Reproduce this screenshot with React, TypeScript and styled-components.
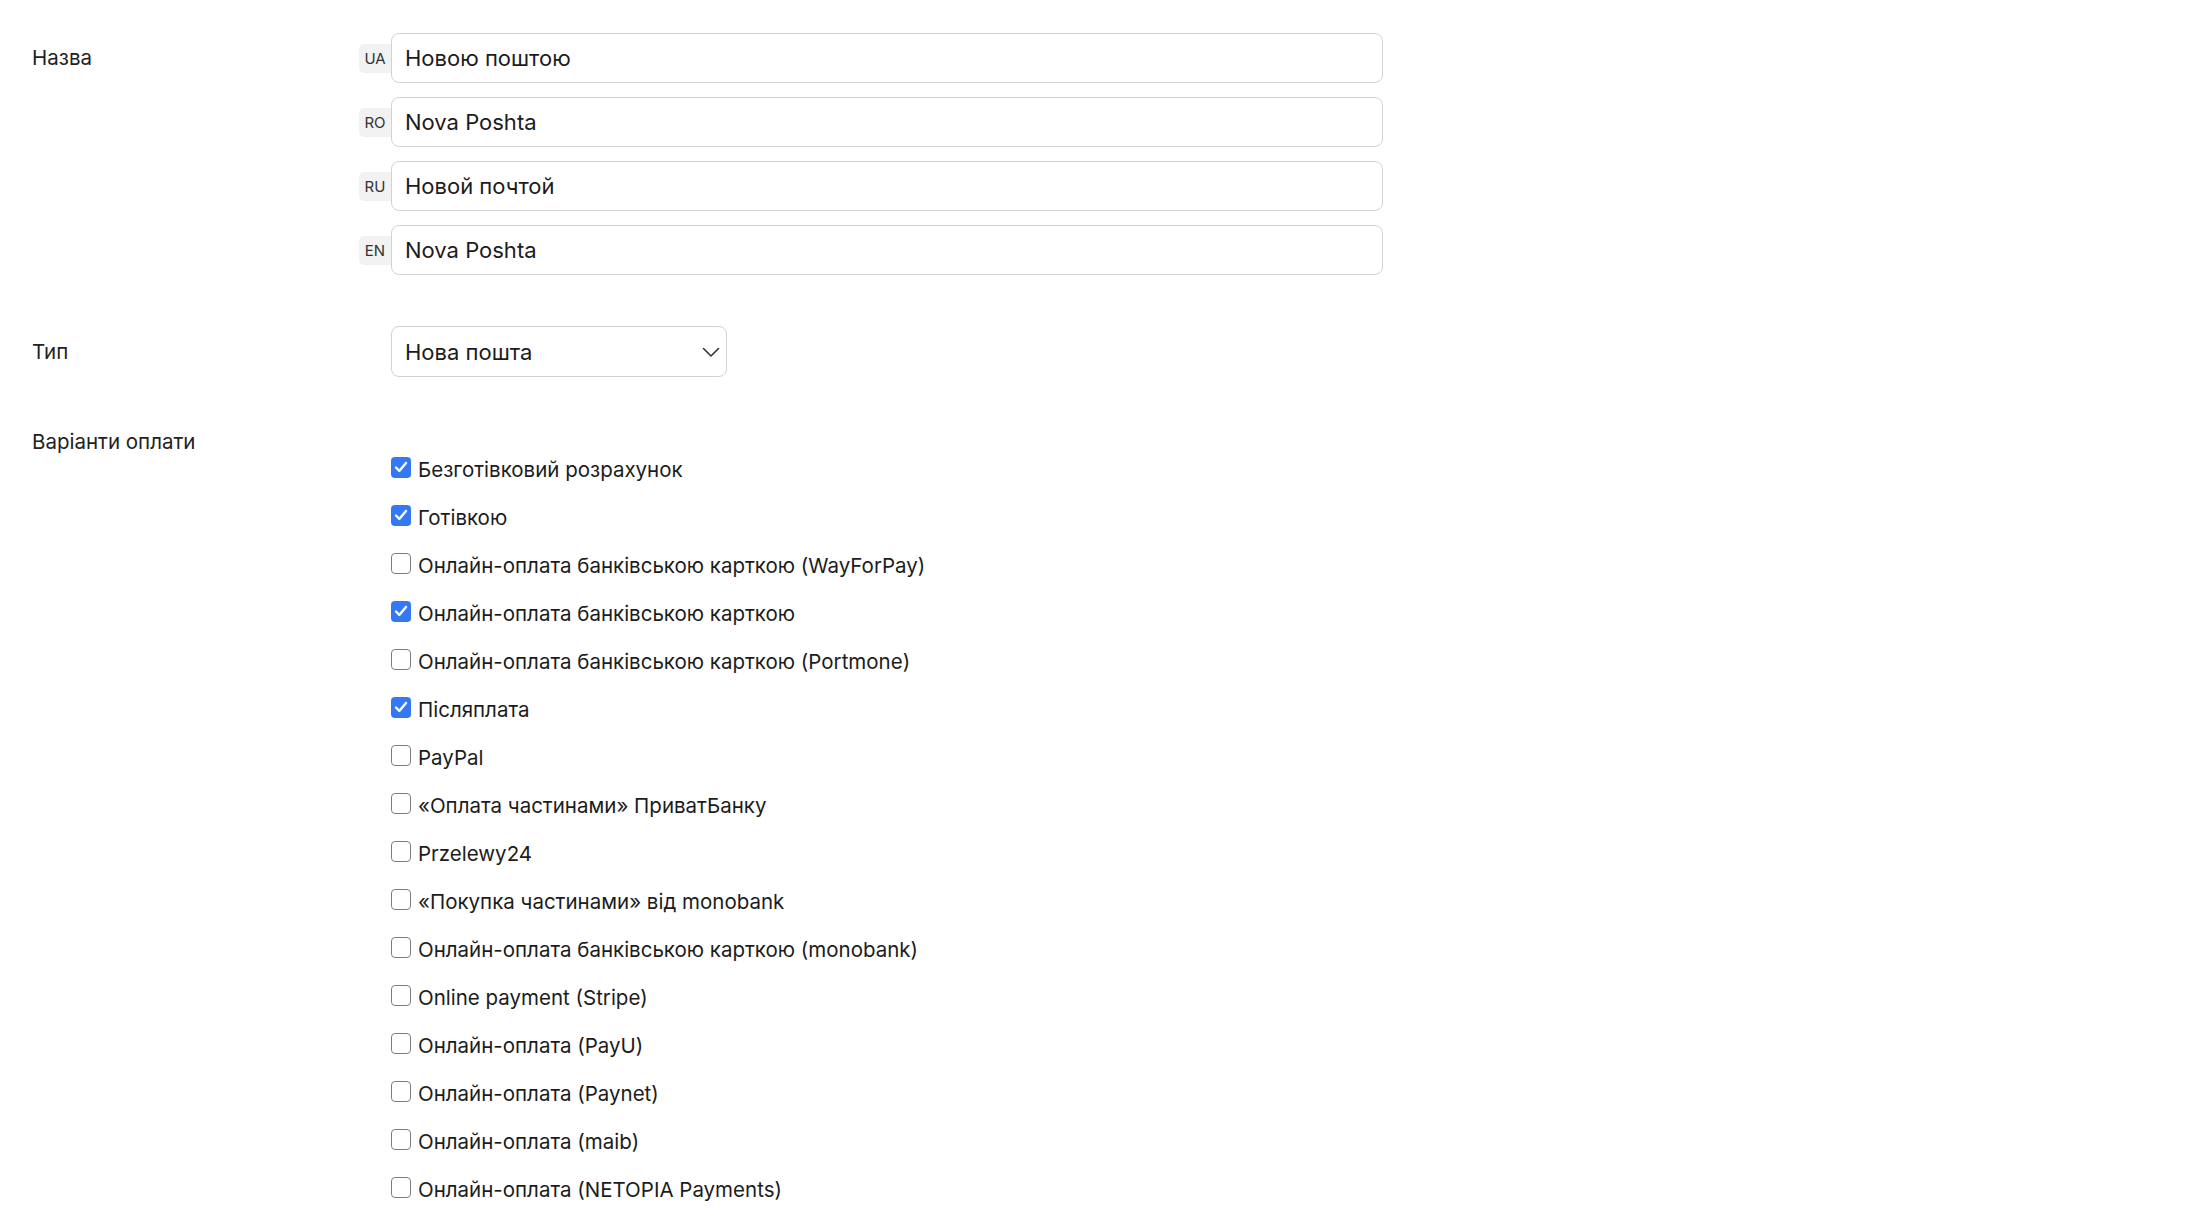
import React from "react"
import styled, { createGlobalStyle } from "styled-components"

const GlobalStyle = createGlobalStyle`
  html, body {
    margin: 0;
    padding: 0;
    background: #ffffff;
  }
  body {
    font-family: Inter, "Noto Sans", "Liberation Sans", sans-serif;
    color: #222222;
  }
`

const Page = styled.div`
  padding: 33px 32px 24px;
  display: flex;
  flex-direction: column;
`

const FormRow = styled.div<{ $gap?: number }>`
  display: grid;
  grid-template-columns: 327px 1024px;
  align-items: start;
  margin-top: ${(p) => p.$gap || 0}px;
`

const Label = styled.div<{ $lh: number }>`
  font-size: 20.5px;
  line-height: ${(p) => p.$lh}px;
  color: #222222;
`

const LangList = styled.div`
  display: flex;
  flex-direction: column;
  gap: 14px;
`

const LangRow = styled.div`
  display: flex;
  align-items: center;
`

const LangBadge = styled.span`
  width: 32px;
  height: 29px;
  flex: none;
  display: flex;
  align-items: center;
  justify-content: center;
  background: #f2f2f2;
  border-radius: 5px 0 0 5px;
  font-size: 15px;
  color: #333333;
`

const TextInput = styled.input`
  flex: 1;
  height: 50px;
  box-sizing: border-box;
  border: 1px solid #d2d2d2;
  border-radius: 8px;
  padding: 0 13px;
  font-family: inherit;
  font-size: 22px;
  color: #1c1c1c;
  background: #ffffff;
  outline: none;
`

const SelectWrap = styled.div`
  position: relative;
  margin-left: 32px;
  width: 336px;
`

const Select = styled.select`
  appearance: none;
  width: 100%;
  height: 51px;
  box-sizing: border-box;
  border: 1px solid #d2d2d2;
  border-radius: 8px;
  padding: 0 40px 0 13px;
  font-family: inherit;
  font-size: 22px;
  color: #1c1c1c;
  background: #ffffff;
  outline: none;
`

const Chevron = styled.svg`
  position: absolute;
  right: 7px;
  top: 21px;
  pointer-events: none;
`

const OptionList = styled.div`
  margin-left: 32px;
  padding-top: 27px;
  display: flex;
  flex-direction: column;
`

const OptionRow = styled.label`
  height: 48px;
  display: flex;
  align-items: center;
  gap: 7px;
  font-size: 20.5px;
  color: #1c1c1c;
  cursor: pointer;
`

const Box = styled.span<{ $checked: boolean }>`
  width: 20px;
  height: 21px;
  flex: none;
  box-sizing: border-box;
  margin-bottom: 4px;
  border-radius: 4px;
  display: flex;
  align-items: center;
  justify-content: center;
  background: ${(p) => (p.$checked ? "#3478f6" : "#ffffff")};
  border: ${(p) => (p.$checked ? "none" : "1.5px solid #7d7d7d")};
`

const names = [
  { code: "UA", value: "Новою поштою" },
  { code: "RO", value: "Nova Poshta" },
  { code: "RU", value: "Новой почтой" },
  { code: "EN", value: "Nova Poshta" },
]

const payments = [
  { label: "Безготівковий розрахунок", checked: true },
  { label: "Готівкою", checked: true },
  { label: "Онлайн-оплата банківською карткою (WayForPay)", checked: false },
  { label: "Онлайн-оплата банківською карткою", checked: true },
  { label: "Онлайн-оплата банківською карткою (Portmone)", checked: false },
  { label: "Післяплата", checked: true },
  { label: "PayPal", checked: false },
  { label: "«Оплата частинами» ПриватБанку", checked: false },
  { label: "Przelewy24", checked: false },
  { label: "«Покупка частинами» від monobank", checked: false },
  { label: "Онлайн-оплата банківською карткою (monobank)", checked: false },
  { label: "Online payment (Stripe)", checked: false },
  { label: "Онлайн-оплата (PayU)", checked: false },
  { label: "Онлайн-оплата (Paynet)", checked: false },
  { label: "Онлайн-оплата (maib)", checked: false },
  { label: "Онлайн-оплата (NETOPIA Payments)", checked: false },
]

export default function App() {
  return (
    <>
      <GlobalStyle />
      <Page>
        <FormRow>
          <Label $lh={50}>Назва</Label>
          <LangList>
            {names.map((n) => (
              <LangRow key={n.code}>
                <LangBadge>{n.code}</LangBadge>
                <TextInput defaultValue={n.value} />
              </LangRow>
            ))}
          </LangList>
        </FormRow>

        <FormRow $gap={51}>
          <Label $lh={51}>Тип</Label>
          <SelectWrap>
            <Select defaultValue="np">
              <option value="np">Нова пошта</option>
            </Select>
            <Chevron width="18" height="11" viewBox="0 0 18 11" fill="none">
              <path d="M1.5 1.5L9 9L16.5 1.5" stroke="#333" strokeWidth="1.6" strokeLinecap="round" strokeLinejoin="round" />
            </Chevron>
          </SelectWrap>
        </FormRow>

        <FormRow $gap={41}>
          <Label $lh={48}>Варіанти оплати</Label>
          <OptionList>
            {payments.map((p) => (
              <OptionRow key={p.label}>
                <Box $checked={p.checked}>
                  {p.checked && (
                    <svg width="14" height="12" viewBox="0 0 14 12" fill="none">
                      <path d="M2 6.5L5.3 10L12 2" stroke="#fff" strokeWidth="2.4" strokeLinecap="round" strokeLinejoin="round" />
                    </svg>
                  )}
                </Box>
                {p.label}
              </OptionRow>
            ))}
          </OptionList>
        </FormRow>
      </Page>
    </>
  )
}
